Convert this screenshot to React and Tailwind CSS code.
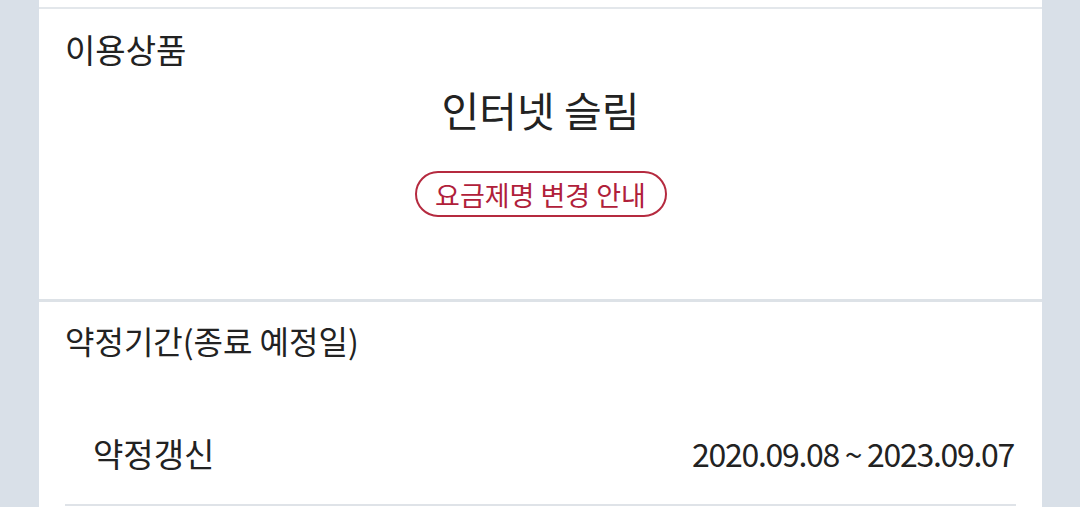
export default function App() {
  return (
    <main className="h-[507px] overflow-hidden bg-[#d9e0e8] pl-[39px] pr-[38px] font-['Noto_Sans_CJK_KR','Noto_Sans',sans-serif] text-[#222]">
      <div className="h-full bg-white">
        <div className="h-[7px]" />
        <div className="border-t-2 border-[#e3e7eb]" />

        {/* 이용상품 */}
        <section className="h-[290px] px-[26px] pt-[20px]">
          <h2 className="text-[33px] leading-[40px]">이용상품</h2>
          <p className="mt-[20px] text-center text-[41px] leading-[40px]">인터넷 슬림</p>
          <div className="mt-[42px] flex justify-center">
            <button className="flex h-[46px] w-[252px] items-center justify-center rounded-full border-2 border-[#b52a3f] text-[27px] leading-none text-[#b0203a]">
              요금제명 변경 안내
            </button>
          </div>
        </section>

        <div className="border-t-[3px] border-[#dde2e7]" />

        {/* 약정기간 */}
        <section className="px-[26px] pt-[18px]">
          <h2 className="text-[32px] leading-[40px]">약정기간(종료 예정일)</h2>
          <div className="mt-[73px] flex items-center justify-between pl-[28px] pr-[2px]">
            <span className="text-[33px] leading-[40px]">약정갱신</span>
            <span className="text-[32px] leading-[40px] tracking-[-1.3px]">2020.09.08 ~ 2023.09.07</span>
          </div>
          <div className="mt-[31px] border-t-2 border-[#dfe3e8]" />
        </section>
      </div>
    </main>
  );
}
